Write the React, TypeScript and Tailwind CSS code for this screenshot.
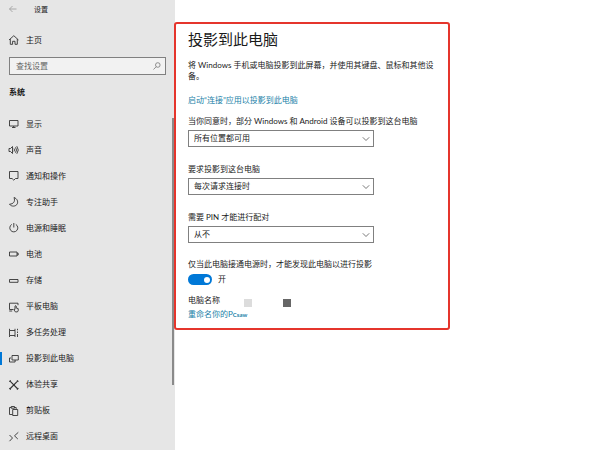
import React from 'react';

interface NavItem {
    label: string;
    icon: React.ReactNode;
    active?: boolean;
}

const Icon: React.FC<{ children: React.ReactNode }> = ({ children }) => (
    <svg className="h-3 w-3 shrink-0" viewBox="0 0 12 12" fill="none" stroke="#333" strokeWidth={0.9} aria-hidden="true">
        {children}
    </svg>
);

const navItems: NavItem[] = [
    { label: '显示', icon: <path d="M1.5 2.5h8.5v5.5h-8.5zM4 9.5h3.5M5.7 8v1.5" /> },
    { label: '声音', icon: <path d="M1 4.5h1.5l2-2v7l-2-2h-1.5zM6 4.5q1 1.5 0 3M7.5 3.3q2 2.7 0 5.4M8.8 2.2q3 3.8 0 7.6" /> },
    { label: '通知和操作', icon: <path d="M1.5 1.5h8.5v7h-2.5l-1.7 1.7-1.7-1.7h-2.6z" /> },
    { label: '专注助手', icon: <path d="M6 1.5c1.5 4-.5 6.500-4.500 6.700 2 2.800 6.500 2.400 7.800-.4 1-2.500-.3-5.300-3.300-6.300z" /> },
    { label: '电源和睡眠', icon: <path d="M5.8 1v4.5M3.8 2.4a4 4 0 1 0 4 0" /> },
    { label: '电池', icon: <path d="M1.5 4h7.5v4h-7.5zM9 5.2h1.2v1.8h-1.2" /> },
    { label: '存储', icon: <path d="M1.5 4.5h8.5v2.8h-8.5z" /> },
    { label: '平板电脑', icon: <path d="M5 8.5h-3.5v-6.3h8.5v2M1.2 10h3M7 8.3v-3.3q.6-.8 1.2 0v2l2 .6v2.3l-.8 1h-2l-1.7-2.4z" /> },
    { label: '多任务处理', icon: <path d="M1.5 3.5h5.5v5h-5.5zM1.5 1.8v1.7M7 1.8v1.7M1.5 8.5v1.5M7 8.5v1.5M9.5 1.8v1.5M9.5 4.5v1.5M9.5 7v3" /> },
    { label: '投影到此电脑', icon: <path d="M4 2.5h6.3v4.5h-6.3zM3 5h-1.5v4h5.6v-2" />, active: true },
    { label: '体验共享', icon: <path d="M2.3 2.3l7 7.2M9.3 2.3l-7 7.2M1.3 2.7l1.4-1.4M9 1.3l1.4 1.4M1.3 9.2l1.4 1.4M9 10.6l1.4-1.4" strokeWidth={1.1} /> },
    { label: '剪贴板', icon: <path d="M4.5 9.5h-3v-7h1.7M6.5 2.5h1.7v1.5M3.2 1.5h3.3v1.7h-3.3zM4.7 4.5h5v6h-5z" /> },
    { label: '远程桌面', icon: <path d="M1.5 4l3 3-3 3.2M10.3 1.3l-3.8 3.5 3.3 3.2" /> },
];

const selects = [
    { id: 'availability', label: '当你同意时，部分 Windows 和 Android 设备可以投影到这台电脑', value: '所有位置都可用' },
    { id: 'ask', label: '要求投影到这台电脑', value: '每次请求连接时' },
    { id: 'pin', label: '需要 PIN 才能进行配对', value: '从不' },
];

const Sidebar: React.FC = () => (
    <aside className="flex w-[175px] shrink-0 flex-col bg-[#e6e6e6]">
        <header className="flex h-[18px] items-center gap-[14px] pl-2">
            <button aria-label="返回">
                <svg className="h-3 w-3" viewBox="0 0 12 12" fill="none" stroke="#999" strokeWidth={0.8}>
                    <path d="M1.5 6h7M4.5 3l-3 3 3 3" />
                </svg>
            </button>
            <span className="text-[7px]">设置</span>
        </header>
        <a href="#home" className="mt-4 flex h-3 items-center gap-[6px] pl-2">
            <Icon>
                <path d="M1 6l4.800-4.300 4.700 4.300M2.300 5v5.300h2.300v-3h2.400v3h2.300v-5.300" />
            </Icon>
            主页
        </a>
        <div className="mx-[9px] mt-[11px] flex h-[18px] items-center border border-[#808080] bg-[#f2f2f2] pr-1 pl-[6px]">
            <input type="text" aria-label="查找设置" placeholder="查找设置" className="min-w-0 flex-1 outline-none placeholder:text-[#666]" />
            <svg className="h-2 w-2" viewBox="0 0 8 8" fill="none" stroke="#777" strokeWidth={0.8} aria-hidden="true">
                <circle cx="4.8" cy="3" r="2.3" />
                <path d="M3.2 4.7l-2.7 2.8" />
            </svg>
        </div>
        <h2 className="mt-2 mb-[10px] pl-[9px] leading-[18px] font-bold">系统</h2>
        <nav className="flex flex-1">
            <ul className="flex flex-1 flex-col">
                {navItems.map((item) => (
                    <li key={item.label} className="flex flex-1">
                        <a href="#settings" aria-current={item.active ? 'page' : undefined} className="flex flex-1 items-center">
                            <span className={`h-[13px] w-[2px] ${item.active ? 'bg-[#0078d7]' : ''}`} />
                            <span className="flex items-center gap-[6px] pl-[6px]">
                                <Icon>{item.icon}</Icon>
                                {item.label}
                            </span>
                        </a>
                    </li>
                ))}
            </ul>
            {/* scrollbar thumb */}
            <div className="mt-[7px] mr-px h-[267px] w-[2px] bg-[#8a8a8a]" />
        </nav>
    </aside>
);

const App: React.FC = () => (
    <div className="flex min-h-screen bg-white font-['Lato','Noto_Sans_CJK_SC',sans-serif] text-[8px] leading-[11px] text-[#1a1a1a]">
        <Sidebar />
        <main className="z-10 mt-[22px] -ml-px w-[276px] self-start rounded-[3px] border-2 border-[#e5352c] px-3 pt-[5px] pb-2">
            <h1 className="text-[15px] leading-[20px]">投影到此电脑</h1>
            <p className="mt-[11px]">将 Windows 手机或电脑投影到此屏幕，并使用其键盘、鼠标和其他设备。</p>
            <a href="#connect" className="mt-[13px] block text-[#1a7fa8]">启动“连接”应用以投影到此电脑</a>
            <div className="mt-[10px] flex flex-col gap-[17px]">
                {selects.map((s) => (
                    <div key={s.id}>
                        <label htmlFor={s.id} className="block">{s.label}</label>
                        <div className="relative mt-[3px] w-[186px]">
                            <select id={s.id} className="block h-[17px] w-full appearance-none border border-[#808080] bg-white pl-[5px]">
                                <option>{s.value}</option>
                            </select>
                            <svg className="pointer-events-none absolute top-[5px] right-1 h-2 w-2" viewBox="0 0 8 8" fill="none" stroke="#555" strokeWidth={0.8} aria-hidden="true">
                                <path d="M.8 2.3l3.2 3.2 3.2-3.2" />
                            </svg>
                        </div>
                    </div>
                ))}
            </div>
            <p className="mt-4">仅当此电脑接通电源时，才能发现此电脑以进行投影</p>
            <label className="mt-1 flex items-center gap-[6px]">
                <input type="checkbox" role="switch" defaultChecked className="sr-only" />
                <span className="flex h-[11px] w-6 items-center justify-end rounded-full bg-[#0078d7] pr-[2px]">
                    <span className="h-[6px] w-[6px] rounded-full bg-white" />
                </span>
                开
            </label>
            <div className="mt-[10px] flex">
                <span className="w-14">电脑名称</span>
                <span className="mt-1 h-2 w-2 bg-[#dcdcdc]" />
                <span className="mt-1 ml-[31px] h-2 w-2 bg-[#666]" />
            </div>
            <a href="#rename" className="mt-[2px] block text-[#1a7fa8]">
                重命名你的P<span className="text-[6px] font-bold">Csaw</span>
            </a>
        </main>
    </div>
);

export default App;
